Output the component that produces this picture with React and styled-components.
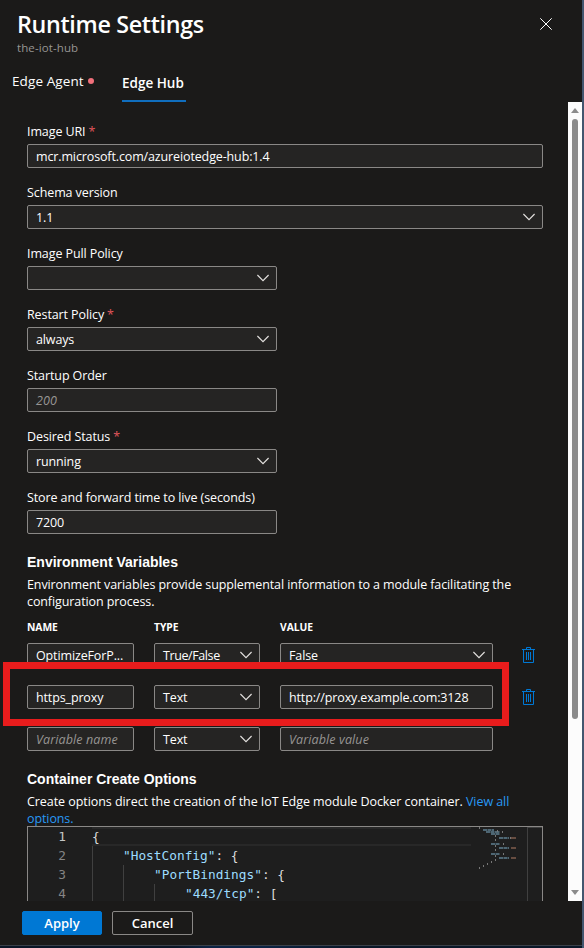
import React from 'react';
import styled, { createGlobalStyle } from 'styled-components';

const Global = createGlobalStyle`
  * { box-sizing: border-box; }
  html, body { margin: 0; height: 100%; overflow: hidden; background: #0b1629; }
  body { font-family: "Open Sans", "Noto Sans", sans-serif; font-size: 12.5px; color: #fff; }
`;

const Desktop = styled.div`
  width: 584px;
  height: 948px;
  padding: 0 2px 3px 0;
  background: linear-gradient(90deg, #0a1526 0 30%, #0c2344 36% 45%, #0a1728 60% 100%);
  box-shadow: inset -2px 0 0 #43566f;
`;

const Panel = styled.section`
  height: 945px;
  display: flex;
  flex-direction: column;
  background: #1b1a19;
`;

const Edge = styled.div`
  height: 1px;
  background: #3b4048;
`;

const Header = styled.header`
  height: 63px;
  display: flex;
  justify-content: space-between;
  padding: 7px 30px 0 17px;
`;

const Title = styled.h1`
  margin: 0;
  font-size: 23.3px;
  line-height: 34px;
  font-weight: 600;
  letter-spacing: -0.33px;
`;

const Subtitle = styled.div`
  font-size: 11.5px;
  line-height: 14px;
  color: #979593;
  letter-spacing: 0.1px;
`;

const CloseButton = styled.button`
  align-self: flex-start;
  margin: 11px 0 0;
  padding: 0;
  border: 0;
  width: 12px;
  height: 12px;
  background: none;
  svg { display: block; }
`;

const Tabs = styled.nav`
  height: 39px;
  display: flex;
  padding-left: 12px;
  font-size: 13.5px;
`;

const Tab = styled.div`
  display: flex;
  align-items: center;
  width: ${p => p.$w}px;
  height: 39px;
  margin-right: 27px;
  padding-top: ${p => (p.$active ? 2 : 0)}px;
  padding-bottom: ${p => (p.$active ? 0 : 1)}px;
  border-bottom: 2px solid ${p => (p.$active ? '#106ebe' : 'transparent')};
  font-weight: ${p => (p.$active ? 600 : 400)};
  letter-spacing: ${p => (p.$active ? 0 : 0.1)}px;
  white-space: nowrap;
`;

const Dot = styled.span`
  width: 6px;
  height: 6px;
  margin-left: 4px;
  border-radius: 50%;
  background: #f1707b;
`;

const Body = styled.div`
  height: 799px;
  display: flex;
`;

const Content = styled.main`
  width: 568px;
  height: 799px;
  overflow: hidden;
  padding: 20px 25px 0 27px;
  letter-spacing: -0.1px;
`;

const Scrollbar = styled.div`
  width: 14px;
  height: 799px;
  display: flex;
  flex-direction: column;
  align-items: center;
  background: #fcfcfc;
  padding: 6px 0;
`;

const Thumb = styled.div`
  width: 6px;
  height: 600px;
  margin: 6px 0 auto;
  border-radius: 3px;
  background: #8b8b8b;
`;

const Field = styled.div`
  width: ${p => (p.$wide ? 516 : 250)}px;
  height: 61px;
`;

const Label = styled.label`
  display: block;
  height: 22px;
  line-height: 19px;
  white-space: nowrap;
`;

const Star = styled.span`
  color: #e0565b;
  margin-left: 3px;
`;

const Box = styled.div`
  height: 24px;
  display: flex;
  align-items: center;
  justify-content: space-between;
  padding: 0 7px 0 8px;
  border: 1px solid #8a8886;
  border-radius: 2px;
  background: #252423;
  white-space: nowrap;
  color: ${p => (p.$hint ? '#979593' : '#fff')};
  font-style: ${p => (p.$hint ? 'italic' : 'normal')};
  letter-spacing: ${p => (p.$hint ? 0.12 : p.$tight ? -0.4 : -0.13)}px;
  svg { flex: none; }
`;

const Heading = styled.h2`
  margin: 0;
  font: bold 14px/18px "Liberation Sans", Arial, sans-serif;
  letter-spacing: 0;
`;

const EnvHeading = styled(Heading)`
  margin-top: 4px;
`;

const Para = styled.p`
  margin: 5px 0 0;
  line-height: 17px;
  white-space: nowrap;
`;

const Line = styled.span`
  display: block;
  letter-spacing: ${p => p.$track ?? -0.1}px;
`;

const Link = styled.span`
  color: #2899f5;
`;

const Grid = styled.div`
  display: grid;
  grid-template-columns: 107px 106px 213px 13px;
  column-gap: 20px;
`;

const HeadGrid = styled(Grid)`
  margin-top: 8px;
  height: 25px;
  font-size: 10.3px;
  font-weight: 700;
  line-height: 18px;
  letter-spacing: -0.05px;
`;

const EnvGrid = styled(Grid)`
  row-gap: 18px;
  height: 108px;
`;

const EnvArea = styled.div`
  position: relative;
  margin-bottom: 19px;
`;

const RowAction = styled.span`
  margin: 4px 0 0 9px;
  svg { display: block; }
`;

const Highlight = styled.div`
  position: absolute;
  left: -24px;
  top: 19px;
  width: 506px;
  height: 64px;
  border: 7px solid #e81c1c;
`;

const Editor = styled.div`
  width: 516px;
  height: 150px;
  margin-top: -1px;
  display: flex;
  border: 1px solid #8a8886;
  background: #1e1e1e;
  font-family: "DejaVu Sans Mono", monospace;
  font-size: 12.8px;
  line-height: 19px;
  letter-spacing: 0;
`;

const Gutter = styled.div`
  width: 38px;
  text-align: right;
  color: #858585;
  & > :first-child { color: #c6c6c6; }
`;

const Code = styled.div`
  width: 379px;
  margin-left: 26px;
`;

const CodeLine = styled.div`
  height: 19px;
  display: flex;
  white-space: pre;
  color: #9cdcfe;
  box-shadow: ${p => (p.$current ? 'inset 0 2px #282828, inset 0 -2px #282828' : 'none')};
`;

const Indent = styled.span`
  width: 31px;
  height: 19px;
  border-left: 1px solid #404040;
`;

const Punct = styled.span`
  color: #dcdcdc;
`;

const Minimap = styled.div`
  width: 57px;
  border-right: 1px solid #404040;
  svg { display: block; }
`;

const Ruler = styled.div`
  flex: 1;
  height: 1px;
  background: #404040;
`;

const Footer = styled.footer`
  height: 44px;
  display: flex;
  gap: 10px;
  padding: 10px 22px;
`;

const Button = styled.button`
  width: ${p => (p.$primary ? 80 : 81)}px;
  height: 24px;
  padding: 1px 0 0;
  border: 1px solid ${p => (p.$primary ? '#0078d4' : '#8a8886')};
  border-radius: 2px;
  background: ${p => (p.$primary ? '#0078d4' : 'transparent')};
  color: #fff;
  font: 600 13px/21px "Open Sans", sans-serif;
`;

const Chevron = () => (
  <svg width="12" height="8" viewBox="0 0 12 8" fill="none" stroke="#e1dfdd" strokeWidth="1.15">
    <path d="M0.4 1l5.6 5.6L11.6 1" />
  </svg>
);

const Trash = () => (
  <svg width="13" height="17" viewBox="0 0 13 17" fill="none" stroke="#0078d4" strokeWidth="1">
    <path d="M0 2.5h13M4.5 2V0.5h4V2M1.5 3v12.5h10V3M4.5 5v8M6.5 5v8M8.5 5v8" />
  </svg>
);

const fields = [
  { label: 'Image URI', req: true, value: 'mcr.microsoft.com/azureiotedge-hub:1.4', wide: true },
  { label: 'Schema version', value: '1.1', wide: true, select: true },
  { label: 'Image Pull Policy', value: '', select: true },
  { label: 'Restart Policy', req: true, value: 'always', select: true },
  { label: 'Startup Order', value: '200', hint: true },
  { label: 'Desired Status', req: true, value: 'running', select: true },
  { label: 'Store and forward time to live (seconds)', value: '7200' },
];

const vars = [
  { name: 'OptimizeForP...', type: 'True/False', value: 'False', select: true },
  { name: 'https_proxy', type: 'Text', value: 'http://proxy.example.com:3128' },
  { name: 'Variable name', type: 'Text', value: 'Variable value', hint: true },
];

const code = [
  { depth: 0, text: '', open: '{' },
  { depth: 1, text: '"HostConfig"', open: ': {' },
  { depth: 2, text: '"PortBindings"', open: ': {' },
  { depth: 3, text: '"443/tcp"', open: ': [' },
];

export default function App() {
  return (
    <Desktop>
      <Global />
      <Panel>
        <Header>
          <div>
            <Title>Runtime Settings</Title>
            <Subtitle>the-iot-hub</Subtitle>
          </div>
          <CloseButton aria-label="Close">
            <svg width="12" height="12" viewBox="0 0 12 12" stroke="#fff" strokeWidth="1">
              <path d="M0.3 0.3l11.4 11.4M11.7 0.3L0.3 11.7" />
            </svg>
          </CloseButton>
        </Header>
        <Tabs>
          <Tab $w={83}>Edge Agent<Dot /></Tab>
          <Tab $w={64} $active>Edge Hub</Tab>
        </Tabs>
        <Body>
          <Content>
            {fields.map(f => (
              <Field key={f.label} $wide={f.wide}>
                <Label>{f.label}{f.req && <Star>*</Star>}</Label>
                <Box $hint={f.hint}><span>{f.value}</span>{f.select && <Chevron />}</Box>
              </Field>
            ))}
            <EnvHeading>Environment Variables</EnvHeading>
            <Para>
              <Line>Environment variables provide supplemental information to a module facilitating the</Line>
              <Line>configuration process.</Line>
            </Para>
            <HeadGrid><span>NAME</span><span>TYPE</span><span>VALUE</span></HeadGrid>
            <EnvArea>
              <EnvGrid>
                {vars.map(v => (
                  <React.Fragment key={v.name}>
                    <Box $hint={v.hint}>{v.name}</Box>
                    <Box $tight={v.type !== 'Text'}><span>{v.type}</span><Chevron /></Box>
                    <Box $hint={v.hint}><span>{v.value}</span>{v.select && <Chevron />}</Box>
                    <RowAction>{!v.hint && <Trash />}</RowAction>
                  </React.Fragment>
                ))}
              </EnvGrid>
              <Highlight />
            </EnvArea>
            <Heading>Container Create Options</Heading>
            <Para>
              <Line $track={-0.06}>Create options direct the creation of the IoT Edge module Docker container. <Link>View all</Link></Line>
              <Line><Link>options.</Link></Line>
            </Para>
            <Editor>
              <Gutter>{code.map((_, i) => <div key={i}>{i + 1}</div>)}</Gutter>
              <Code>
                {code.map((l, i) => (
                  <CodeLine key={i} $current={i === 0}>
                    {Array.from({ length: l.depth }, (_, d) => <Indent key={d} />)}
                    {l.text}<Punct>{l.open}</Punct>
                  </CodeLine>
                ))}
              </Code>
              <Minimap>
                <svg width="56" height="60" viewBox="0 0 56 60" fill="none">
                  <path stroke="#5f7f90" strokeWidth="1.7" strokeDasharray="4 .5" d="M12 3h11M15 5h14M20 7h9M28 11h10M20 17h9M28 21h10M20 27h9M28 31h10" />
                  <path stroke="#805d4e" strokeWidth="1.5" d="M40 11h5M40 21h5M40 31h5" />
                  <path stroke="#777" d="M8.5 0v2M26.5 3v2M31.5 4v2M24.5 8v2M24.5 12v2M32.5 16v2M39.5 10v2M24.5 18v2M24.5 22v2M32.5 26v2M24.5 28v2M24.5 32v2M20.5 34v2M16.5 36v2M12.5 38v2M8.5 40v2" />
                </svg>
              </Minimap>
              <Ruler />
            </Editor>
          </Content>
          <Scrollbar>
            <svg width="8" height="5" viewBox="0 0 8 5"><path fill="#8b8b8b" d="M0 5l4-5 4 5z" /></svg>
            <Thumb />
            <svg width="8" height="5" viewBox="0 0 8 5"><path fill="#8b8b8b" d="M0 0l4 5 4-5z" /></svg>
          </Scrollbar>
        </Body>
        <Footer>
          <Button $primary>Apply</Button>
          <Button>Cancel</Button>
        </Footer>
      </Panel>
      <Edge />
    </Desktop>
  );
}
